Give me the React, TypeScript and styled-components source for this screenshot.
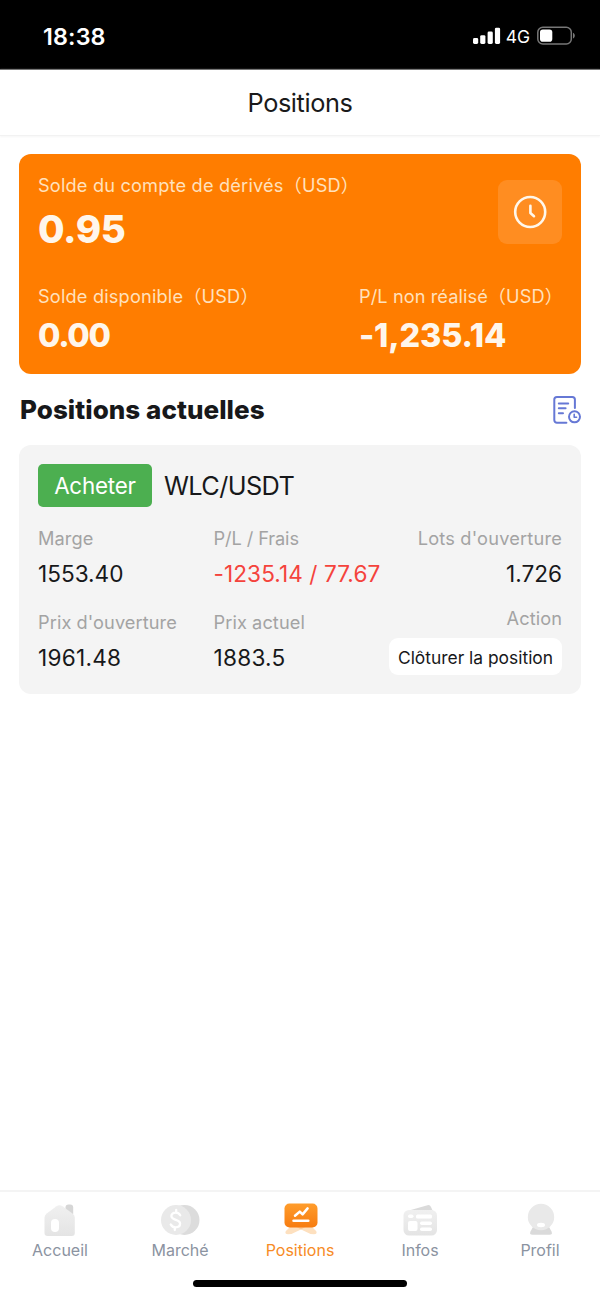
import React from "react";
import styled, { createGlobalStyle } from "styled-components";

const GlobalStyle = createGlobalStyle`
  * { box-sizing: border-box; }
  body { margin: 0; background: #fff; }
`;

const Screen = styled.div`
  display: flex;
  flex-direction: column;
  width: 600px;
  height: 1299px;
  overflow: hidden;
  background: #fff;
  color: #17181a;
  font-family: Inter, "Noto Sans CJK SC", sans-serif;
  white-space: nowrap;
`;

const StatusBar = styled.div`
  display: flex;
  justify-content: space-between;
  align-items: center;
  height: 69px;
  padding: 3px 24px 0 43px;
  background: #000;
  color: #fff;
`;

const Clock = styled.span`
  font-size: 23.3px;
  font-weight: 600;
  letter-spacing: 0.15px;
`;

const StatusIcons = styled.div`
  display: flex;
  align-items: center;
`;

const Network = styled.span`
  margin: 0 7px 0 5px;
  font-size: 17.5px;
  font-weight: 400;
`;

const Header = styled.header`
  display: flex;
  align-items: center;
  justify-content: center;
  height: 67px;
  border-top: 1px solid #777;
  border-bottom: 1px solid #f2f2f2;
  box-shadow: 0 1px 2px #f6f6f6;
  font-size: 25.3px;
  letter-spacing: -0.4px;
  color: #1a1a1a;
`;

const Main = styled.main`
  flex: 1;
  padding: 18px 19px 0;
`;

const BalanceCard = styled.section`
  height: 220px;
  padding: 20px 19px 0;
  border-radius: 12px;
  background: #ff7d00;
  color: #fff6eb;
`;

const BalanceTop = styled.div`
  display: flex;
  justify-content: space-between;
  height: 111px;
`;

const BalanceBottom = styled.div`
  display: grid;
  grid-template-columns: 321px 1fr;
`;

const BalanceLabel = styled.div<{ $tracking?: number }>`
  height: 22px;
  line-height: 22px;
  font-size: 18.2px;
  letter-spacing: ${(p) => p.$tracking ?? 0.18}px;
  color: #ffe1bd;
`;

const BalanceValue = styled.div<{ $large?: boolean; $tracking?: number }>`
  height: ${(p) => (p.$large ? 44 : 34)}px;
  margin-top: ${(p) => (p.$large ? 11 : 12)}px;
  line-height: ${(p) => (p.$large ? 44 : 34)}px;
  font-size: ${(p) => (p.$large ? 38.5 : 32.5)}px;
  font-weight: 800;
  letter-spacing: ${(p) => p.$tracking ?? 0}px;
`;

const HistoryButton = styled.button`
  display: grid;
  place-items: center;
  width: 64px;
  height: 64px;
  margin-top: 6px;
  padding: 0;
  border: 0;
  border-radius: 9px;
  background: #ff8d21;
`;

const SectionHead = styled.div`
  display: flex;
  align-items: center;
  justify-content: space-between;
  height: 71px;
`;

const SectionTitle = styled.h2`
  margin: 0;
  padding-left: 1px;
  font-size: 26px;
  font-weight: 800;
  letter-spacing: 0.05px;
`;

const PositionCard = styled.section`
  height: 249px;
  padding: 19px 19px 0;
  border-radius: 12px;
  background: #f4f4f4;
`;

const PairRow = styled.div`
  display: flex;
  align-items: center;
  gap: 12px;
  height: 43px;
`;

const SideTag = styled.span`
  display: grid;
  place-items: center;
  width: 114px;
  height: 43px;
  border-radius: 5px;
  background: #4caf50;
  color: #fff;
  font-size: 22.4px;
  letter-spacing: -0.2px;
`;

const Pair = styled.span`
  font-size: 25.3px;
  letter-spacing: -0.6px;
`;

const Details = styled.div<{ $top: number }>`
  display: grid;
  grid-template-columns: 175.5px 1fr auto;
  margin-top: ${(p) => p.$top}px;
`;

const Cell = styled.div<{ $end?: boolean }>`
  display: flex;
  flex-direction: column;
  align-items: ${(p) => (p.$end ? "flex-end" : "flex-start")};
`;

const Label = styled.div<{ $raised?: boolean; $tracking?: number }>`
  height: 22px;
  margin-top: ${(p) => (p.$raised ? -4 : 0)}px;
  line-height: 22px;
  font-size: 18.2px;
  letter-spacing: ${(p) => p.$tracking ?? 0.08}px;
  color: #a3a3a3;
`;

const Value = styled.div<{ $loss?: boolean; $tracking?: number }>`
  height: 28px;
  margin-top: 10px;
  line-height: 29px;
  font-size: 22.6px;
  letter-spacing: ${(p) => p.$tracking ?? 0}px;
  color: ${(p) => (p.$loss ? "#f4433c" : "#17181a")};
`;

const CloseButton = styled.button`
  width: 173px;
  height: 37px;
  margin-top: 9px;
  padding: 1px 0 0;
  border: 0;
  border-radius: 9px;
  background: #fff;
  color: #17181a;
  font: 400 17.4px Inter, sans-serif;
`;

const TabBar = styled.nav`
  display: grid;
  grid-template-columns: repeat(5, 120px);
  height: 90px;
  border-top: 2px solid #f4f4f4;
`;

const Tab = styled.div<{ $active?: boolean }>`
  display: flex;
  flex-direction: column;
  align-items: center;
  padding-top: 8px;
  color: ${(p) => (p.$active ? "#f78b25" : "#8b93a1")};
  font-size: 16px;
  letter-spacing: 0;
  line-height: 20px;
`;

const TabIcon = styled.svg`
  width: 44px;
  height: 40px;
`;

const HomeArea = styled.footer`
  display: flex;
  justify-content: center;
  height: 19px;
`;

const HomeIndicator = styled.div`
  width: 214px;
  height: 7px;
  border-radius: 4px;
  background: #000;
`;

const SignalIcon = () => (
  <svg width="28" height="18" viewBox="0 0 28 18" fill="#fff">
    <rect x="0" y="11" width="5.2" height="6" rx="1.4" />
    <rect x="7.2" y="8.2" width="5.2" height="8.8" rx="1.4" />
    <rect x="14.6" y="4.5" width="5.2" height="12.5" rx="1.4" />
    <rect x="21.9" y="0.7" width="5.2" height="16.3" rx="1.4" />
  </svg>
);

const BatteryIcon = () => (
  <svg width="39" height="20" viewBox="0 0 39 20">
    <rect x="0.8" y="1.3" width="33.5" height="16.6" rx="5" fill="none" stroke="#777" strokeWidth="1.5" />
    <rect x="3" y="3.5" width="12.3" height="12.2" rx="2.8" fill="#fff" />
    <path d="M36 6.8c2.4 1 2.4 4.7 0 5.7z" fill="#777" />
  </svg>
);

const ClockIcon = () => (
  <svg width="34" height="34" viewBox="0 0 34 34" fill="none" stroke="#fff7eb" strokeWidth="2.6" strokeLinecap="round" strokeLinejoin="round">
    <circle cx="17.2" cy="17" r="15" />
    <path d="M17.4 10.8V18L21 21.2" />
  </svg>
);

const OrdersIcon = () => (
  <svg width="30" height="30" viewBox="0 0 30 30" fill="none" stroke="#6678d5" strokeWidth="2" strokeLinecap="round" strokeLinejoin="round">
    <path d="M15.4 27.7H5.9a2.6 2.6 0 0 1-2.6-2.6V4.6A2.6 2.6 0 0 1 5.9 2h15.4a2.6 2.6 0 0 1 2.6 2.6V13" />
    <path d="M7.8 8.5h9.4M7.8 13.3h6.8M7.8 18.2h4.2" />
    <circle cx="23.5" cy="21.8" r="5.5" />
    <path d="M23.2 19.2v3h2.4" strokeWidth="1.6" />
  </svg>
);

const HomeGlyph = () => (
  <TabIcon viewBox="0 0 44 40">
    <defs>
      <linearGradient id="pale" x1="0" y1="0" x2="0" y2="1">
        <stop offset="0" stopColor="#f0f0f0" />
        <stop offset="1" stopColor="#e4e4e4" />
      </linearGradient>
    </defs>
    <rect x="27.5" y="4.5" width="7.7" height="12" rx="3" fill="#d6d6d6" />
    <path d="M18.5 6.2q3-2 6 0l10 7.2q2.3 1.8 2.3 4.3V33q0 3-3 3H9.5q-3 0-3-3V17.7q0-2.5 2.2-4.3z" fill="url(#pale)" />
    <rect x="13" y="19" width="8" height="13" rx="4" fill="#fff" />
  </TabIcon>
);

const MarketGlyph = () => (
  <TabIcon viewBox="0 0 44 40">
    <circle cx="26.5" cy="20" r="15" fill="#dcdcdc" />
    <circle cx="18" cy="20" r="15" fill="#e9e9e9" />
    <path d="M22.2 15.2c-1-1.8-2.5-2.6-4.6-2.6-2.5 0-4.2 1.4-4.2 3.5 0 4.8 8.7 2.7 8.7 7.5 0 2.2-1.8 3.7-4.5 3.7-2.3 0-3.9-1-4.9-2.9M18.2 10v2.6M16.8 27.3V30" fill="none" stroke="#fff" strokeWidth="2.3" strokeLinecap="round" />
  </TabIcon>
);

const PositionsGlyph = () => (
  <TabIcon viewBox="0 0 44 40">
    <defs>
      <linearGradient id="board" x1="0" y1="0" x2="0" y2="1">
        <stop offset="0" stopColor="#ff9d2c" />
        <stop offset="1" stopColor="#f77c10" />
      </linearGradient>
    </defs>
    <path d="M23 27L34 27L38.3 31.2Q39.5 34 36 34.2L32.5 34Q30 32.5 23 29.5Q16 32.5 13.5 34L10 34.2Q6.5 34 7.7 31.2L12 27Z" fill="#fde0bf" />
    <path d="M17 26h12l-6 3.5z" fill="#fbcb98" />
    <rect x="6.5" y="3.5" width="33" height="24" rx="5" fill="url(#board)" />
    <path d="M17 15.8l4.8-4.2 2.8 2.8 5-6" fill="none" stroke="#fff" strokeWidth="2.5" strokeLinecap="round" strokeLinejoin="round" />
    <path d="M15.5 20.8h14.8" stroke="#fff" strokeWidth="2.5" strokeLinecap="round" />
  </TabIcon>
);

const NewsGlyph = () => (
  <TabIcon viewBox="0 0 44 40">
    <path d="M11 10.5L29.5 5.2q2.5-.6 3.5 1.8l2 4.5-24 1z" fill="#dadada" />
    <rect x="5.5" y="10" width="33.5" height="25.5" rx="5.5" fill="url(#pale)" />
    <g fill="#fff">
      <rect x="10" y="14.5" width="5.5" height="3.5" rx="1.7" />
      <rect x="18" y="14.5" width="16" height="4" rx="1.5" />
      <rect x="10" y="21" width="9.5" height="10" rx="2" />
      <rect x="22" y="21.5" width="12" height="3.5" rx="1.7" />
      <rect x="22" y="27.5" width="12" height="3.5" rx="1.7" />
    </g>
  </TabIcon>
);

const ProfileGlyph = () => (
  <TabIcon viewBox="0 0 44 40">
    <path d="M16 25h14l3.5 6.5q1.5 3.2-2 3.2h-17q-3.5 0-2-3.2z" fill="#dadada" />
    <circle cx="23" cy="17" r="13.2" fill="#e9e9e9" />
    <ellipse cx="23" cy="25" rx="4" ry="2.2" fill="#fff" />
  </TabIcon>
);

export default function App() {
  return (
    <>
      <GlobalStyle />
      <Screen>
        <StatusBar>
          <Clock>18:38</Clock>
          <StatusIcons>
            <SignalIcon />
            <Network>4G</Network>
            <BatteryIcon />
          </StatusIcons>
        </StatusBar>
        <Header>Positions</Header>
        <Main>
          <BalanceCard>
            <BalanceTop>
              <div>
                <BalanceLabel>Solde du compte de dérivés（USD）</BalanceLabel>
                <BalanceValue $large $tracking={-0.4}>0.95</BalanceValue>
              </div>
              <HistoryButton aria-label="Historique">
                <ClockIcon />
              </HistoryButton>
            </BalanceTop>
            <BalanceBottom>
              <div>
                <BalanceLabel>Solde disponible（USD）</BalanceLabel>
                <BalanceValue $tracking={-1.3}>0.00</BalanceValue>
              </div>
              <div>
                <BalanceLabel $tracking={0.08}>P/L non réalisé（USD）</BalanceLabel>
                <BalanceValue $tracking={-0.2}>-1,235.14</BalanceValue>
              </div>
            </BalanceBottom>
          </BalanceCard>
          <SectionHead>
            <SectionTitle>Positions actuelles</SectionTitle>
            <OrdersIcon />
          </SectionHead>
          <PositionCard>
            <PairRow>
              <SideTag>Acheter</SideTag>
              <Pair>WLC/USDT</Pair>
            </PairRow>
            <Details $top={20}>
              <Cell>
                <Label>Marge</Label>
                <Value>1553.40</Value>
              </Cell>
              <Cell>
                <Label $tracking={-0.1}>P/L / Frais</Label>
                <Value $loss $tracking={0.08}>-1235.14 / 77.67</Value>
              </Cell>
              <Cell $end>
                <Label $tracking={0.2}>Lots d'ouverture</Label>
                <Value>1.726</Value>
              </Cell>
            </Details>
            <Details $top={24}>
              <Cell>
                <Label>Prix d'ouverture</Label>
                <Value $tracking={0.25}>1961.48</Value>
              </Cell>
              <Cell>
                <Label>Prix actuel</Label>
                <Value $tracking={0.25}>1883.5</Value>
              </Cell>
              <Cell $end>
                <Label $raised>Action</Label>
                <CloseButton>Clôturer la position</CloseButton>
              </Cell>
            </Details>
          </PositionCard>
        </Main>
        <TabBar>
          <Tab><HomeGlyph />Accueil</Tab>
          <Tab><MarketGlyph />Marché</Tab>
          <Tab $active><PositionsGlyph />Positions</Tab>
          <Tab><NewsGlyph />Infos</Tab>
          <Tab><ProfileGlyph />Profil</Tab>
        </TabBar>
        <HomeArea>
          <HomeIndicator />
        </HomeArea>
      </Screen>
    </>
  );
}
